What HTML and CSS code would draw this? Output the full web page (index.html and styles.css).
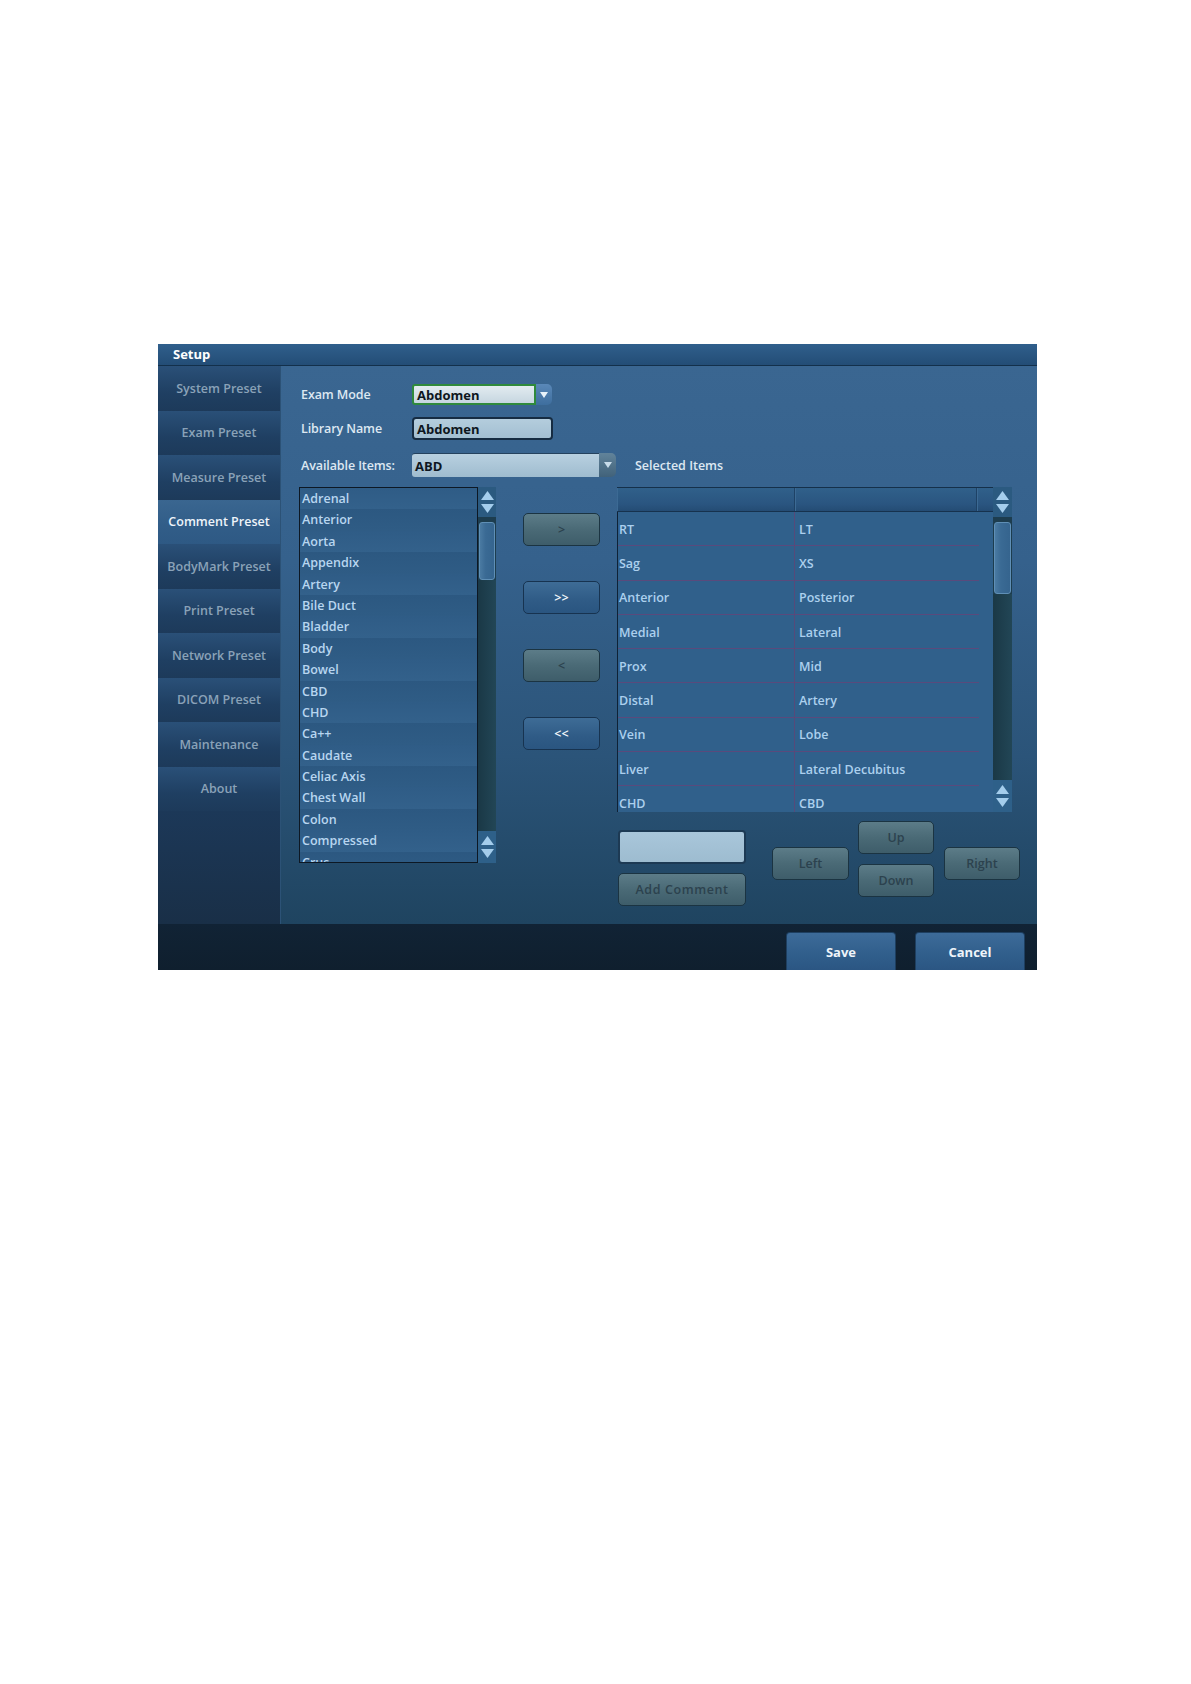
FILE: index.html
```html
<!DOCTYPE html>
<html>
<head>
<meta charset="utf-8">
<title>Setup</title>
<link rel="stylesheet" href="styles.css">
</head>
<body>
<div class="window">
  <div class="titlebar">Setup</div>
  <div class="body">
    <nav class="sidebar">
      <div class="nav-item">System Preset</div>
      <div class="nav-item">Exam Preset</div>
      <div class="nav-item">Measure Preset</div>
      <div class="nav-item active">Comment Preset</div>
      <div class="nav-item">BodyMark Preset</div>
      <div class="nav-item">Print Preset</div>
      <div class="nav-item">Network Preset</div>
      <div class="nav-item">DICOM Preset</div>
      <div class="nav-item">Maintenance</div>
      <div class="nav-item">About</div>
      <div class="nav-rest"></div>
    </nav>
    <main class="main">
      <div class="form-row row-exam">
        <span class="lbl">Exam Mode</span>
        <div class="combo combo-exam">
          <span class="field field-exam">Abdomen</span>
          <span class="combo-btn btn-blue"><svg width="8" height="6" viewBox="0 0 8 6"><polygon points="0,0 8,0 4,6" fill="#e8f2fa"/></svg></span>
        </div>
      </div>
      <div class="form-row row-lib">
        <span class="lbl">Library Name</span>
        <span class="field field-lib">Abdomen</span>
      </div>
      <div class="form-row row-avail">
        <span class="lbl">Available Items:</span>
        <div class="combo combo-avail">
          <span class="field field-avail">ABD</span>
          <span class="combo-btn btn-gray"><svg width="8" height="6" viewBox="0 0 8 6"><polygon points="0,0 8,0 4,6" fill="#c8dcea"/></svg></span>
        </div>
        <span class="lbl-sel">Selected Items</span>
      </div>
      <div class="content">
        <div class="avail">
          <div class="list">
            <div class="li">Adrenal</div>
            <div class="li">Anterior</div>
            <div class="li">Aorta</div>
            <div class="li">Appendix</div>
            <div class="li">Artery</div>
            <div class="li">Bile Duct</div>
            <div class="li">Bladder</div>
            <div class="li">Body</div>
            <div class="li">Bowel</div>
            <div class="li">CBD</div>
            <div class="li">CHD</div>
            <div class="li">Ca++</div>
            <div class="li">Caudate</div>
            <div class="li">Celiac Axis</div>
            <div class="li">Chest Wall</div>
            <div class="li">Colon</div>
            <div class="li">Compressed</div>
            <div class="li">Crus</div>
          </div>
          <div class="vscroll vs-left">
            <div class="vs-arrows">
              <svg width="13" height="9" viewBox="0 0 13 9"><polygon points="0,9 6.5,0 13,9" fill="#a4cdec"/></svg>
              <svg width="13" height="9" viewBox="0 0 13 9"><polygon points="0,0 13,0 6.5,9" fill="#a4cdec"/></svg>
            </div>
            <div class="vs-thumb thumb-left"></div>
            <div class="vs-track"></div>
            <div class="vs-arrows vs-bottom">
              <svg width="13" height="9" viewBox="0 0 13 9"><polygon points="0,9 6.5,0 13,9" fill="#a4cdec"/></svg>
              <svg width="13" height="9" viewBox="0 0 13 9"><polygon points="0,0 13,0 6.5,9" fill="#a4cdec"/></svg>
            </div>
          </div>
        </div>

        <div class="move-btns">
          <button class="btn btn-dis">&gt;</button>
          <button class="btn btn-act">&gt;&gt;</button>
          <button class="btn btn-dis">&lt;</button>
          <button class="btn btn-act">&lt;&lt;</button>
        </div>

        <div class="selected">
          <div class="table-wrap">
            <div class="table">
              <div class="thead">
                <div class="th th1"></div>
                <div class="th th2"></div>
                <div class="th th3"></div>
              </div>
              <div class="tbody">
                <div class="tr"><div class="td td1">RT</div><div class="td td2">LT</div></div>
                <div class="tr"><div class="td td1">Sag</div><div class="td td2">XS</div></div>
                <div class="tr"><div class="td td1">Anterior</div><div class="td td2">Posterior</div></div>
                <div class="tr"><div class="td td1">Medial</div><div class="td td2">Lateral</div></div>
                <div class="tr"><div class="td td1">Prox</div><div class="td td2">Mid</div></div>
                <div class="tr"><div class="td td1">Distal</div><div class="td td2">Artery</div></div>
                <div class="tr"><div class="td td1">Vein</div><div class="td td2">Lobe</div></div>
                <div class="tr"><div class="td td1">Liver</div><div class="td td2">Lateral Decubitus</div></div>
                <div class="tr"><div class="td td1">CHD</div><div class="td td2">CBD</div></div>
              </div>
            </div>
            <div class="vscroll vs-right">
              <div class="vs-arrows">
                <svg width="13" height="9" viewBox="0 0 13 9"><polygon points="0,9 6.5,0 13,9" fill="#a4cdec"/></svg>
                <svg width="13" height="9" viewBox="0 0 13 9"><polygon points="0,0 13,0 6.5,9" fill="#a4cdec"/></svg>
              </div>
              <div class="vs-thumb thumb-right"></div>
              <div class="vs-track"></div>
              <div class="vs-arrows vs-bottom">
                <svg width="13" height="9" viewBox="0 0 13 9"><polygon points="0,9 6.5,0 13,9" fill="#a4cdec"/></svg>
                <svg width="13" height="9" viewBox="0 0 13 9"><polygon points="0,0 13,0 6.5,9" fill="#a4cdec"/></svg>
              </div>
            </div>
          </div>

          <div class="controls">
            <div class="comment-col">
              <div class="comment-input"></div>
              <button class="btn btn-dis btn-add">Add Comment</button>
            </div>
            <button class="btn btn-dis btn-side">Left</button>
            <div class="updown">
              <button class="btn btn-dis btn-ud">Up</button>
              <button class="btn btn-dis btn-ud">Down</button>
            </div>
            <button class="btn btn-dis btn-side">Right</button>
          </div>
        </div>
      </div>
    </main>
  </div>
  <div class="footer">
    <button class="foot-btn">Save</button>
    <button class="foot-btn">Cancel</button>
  </div>
</div>
</body>
</html>
```

FILE: styles.css
```css
* { box-sizing: border-box; }
html, body { margin: 0; padding: 0; background: #ffffff; }
body {
  font-family: "Open Sans", "Liberation Sans", sans-serif;
  font-weight: 600;
  font-size: 12.5px;
}

.window {
  width: 879px;
  margin: 344px 0 0 158px;
  display: flex;
  flex-direction: column;
}

.titlebar {
  height: 22px;
  padding-left: 15px;
  line-height: 21px;
  color: #ffffff;
  font-weight: 700;
  font-size: 13px;
  background: linear-gradient(#305f8c, #234d76);
  border-bottom: 1px solid #13304b;
}

.body {
  display: flex;
  height: 558px;
}

.sidebar {
  width: 122px;
  display: flex;
  flex-direction: column;
  background: #1a3350;
}
.nav-item {
  height: 44.5px;
  display: flex;
  align-items: center;
  justify-content: center;
  font-size: 12.5px;
  color: #8aa2b8;
  background: linear-gradient(#2a5078, #1f3f62 60%, #1d3a5a);
  white-space: nowrap;
}
.nav-item.active {
  color: #eef4fa;
  background: linear-gradient(#3a6690, #315d88 60%, #2e5984);
}
.nav-rest {
  flex: 1;
  background: linear-gradient(#1c3858, #192f47);
}

.main {
  flex: 1;
  padding: 18px 0 0 18px;
  background: linear-gradient(#3a6691 0%, #35618c 35%, #2b5479 70%, #1f4460 100%);
  border-left: 1px solid #2c5276;
}

.form-row {
  display: flex;
  align-items: center;
}
.row-exam { height: 21px; }
.row-lib { height: 23px; margin-top: 12px; }
.row-avail { height: 24px; margin-top: 13px; }

.lbl {
  width: 113px;
  padding-left: 2px;
  color: #dde8f2;
  font-size: 12.5px;
  letter-spacing: -0.1px;
  white-space: nowrap;
}
.lbl-sel {
  margin-left: 19px;
  color: #dde8f2;
  font-size: 12.5px;
}

.combo {
  display: flex;
  height: 100%;
}
.field {
  display: flex;
  align-items: center;
  padding-left: 3px;
  color: #0e1620;
  font-weight: 700;
  font-size: 13px;
  height: 100%;
}
.field-exam {
  width: 124px;
  background: linear-gradient(#e2ebf0, #c6d6e0);
  border: 2px solid #2f8a3c;
  border-radius: 3px 0 0 3px;
}
.field-lib {
  width: 141px;
  background: linear-gradient(#b4cddd, #a3bfd2);
  border: 2px solid #162c42;
  border-radius: 4px;
}
.field-avail {
  width: 187px;
  background: linear-gradient(#b8d0e0, #9fbccf);
  border-top: 1px solid #24425e;
  border-radius: 3px 0 0 3px;
}
.combo-btn {
  display: flex;
  align-items: center;
  justify-content: center;
  height: 100%;
}
.btn-blue {
  width: 16px;
  background: linear-gradient(#5a88b8, #3e6e9e);
  border-radius: 0 5px 5px 0;
}
.btn-gray {
  width: 17px;
  background: linear-gradient(#61839a, #41627a);
  border-radius: 0 5px 5px 0;
}

.content {
  display: flex;
  align-items: flex-start;
  margin-top: 10px;
}

.avail {
  display: flex;
  height: 376px;
}
.list {
  width: 179px;
  height: 376px;
  overflow: hidden;
  border: 1px solid #0d1824;
  background: #2e5b84;
}
.li {
  height: 21.4px;
  line-height: 21.4px;
  padding-left: 2px;
  color: #b8d6f0;
  font-size: 12.5px;
  white-space: nowrap;
}
.li:nth-child(odd) { background: linear-gradient(#2f5c86, #33618b); }
.li:nth-child(even) { background: linear-gradient(#2c5881, #2f5c85); }

.vscroll {
  display: flex;
  flex-direction: column;
  background: #1d3d4f;
}
.vs-left { width: 18px; height: 376px; }
.vs-right { width: 19px; height: 325px; }
.vs-arrows {
  height: 30px;
  display: flex;
  flex-direction: column;
  align-items: center;
  justify-content: center;
  gap: 4px;
  background: #2b5a80;
}
.vs-bottom { height: 32px; background: #2e6089; }
.vs-thumb {
  margin: 5px 1px 0 1px;
  background: linear-gradient(90deg, #4a7aa2, #3a6a94 40%, #35648e);
  border: 1px solid #5f8fb6;
  border-radius: 3px;
}
.thumb-left { height: 58px; }
.thumb-right { height: 72px; }
.vs-track {
  flex: 1;
  background: linear-gradient(90deg, #1a3846, #224656);
}

.move-btns {
  display: flex;
  flex-direction: column;
  gap: 35px;
  margin-left: 27px;
  padding-top: 26px;
}
.btn {
  font-family: "Open Sans", "Liberation Sans", sans-serif;
  font-weight: 600;
  font-size: 12.5px;
  padding: 0;
  border-radius: 5px;
  cursor: default;
}
.move-btns .btn { width: 77px; height: 33px; }
.btn-dis {
  color: #2c424e;
  background: linear-gradient(#5c7c88, #4a6a76 50%, #3e5d6a);
  border: 1px solid #1b3442;
}
.btn-act {
  color: #f0f6fb;
  background: linear-gradient(#3e6c96, #2f5b86 60%, #2a5580);
  border: 1px solid #173350;
}

.selected {
  margin-left: 17px;
  display: flex;
  flex-direction: column;
}
.table-wrap {
  display: flex;
  height: 325px;
}
.table {
  width: 376px;
  height: 325px;
  display: flex;
  flex-direction: column;
  overflow: hidden;
  background: #30608b;
  border-top: 1px solid #15304a;
}
.thead {
  display: flex;
  height: 24px;
  flex: none;
  background: linear-gradient(#30608a, #2a5580 70%, #244c74);
  border-bottom: 1px solid #16324e;
}
.th { height: 100%; border-right: 1px solid #1e4266; box-shadow: inset 1px 0 0 #3c6a94; }
.th1 { width: 178px; }
.th2 { width: 182px; }
.th3 { flex: 1; border-right: none; }
.tbody { flex: 1; overflow: hidden; border-left: 1px solid #0f2236; }
.tr {
  display: flex;
  height: 34.3px;
  flex: none;
  background:
    linear-gradient(#5a4a7c, #5a4a7c) left bottom / 361px 1px no-repeat,
    #30608b;
}
.td {
  display: flex;
  align-items: center;
  color: #acd0ee;
  font-size: 12.5px;
  white-space: nowrap;
}
.td1 { width: 177px; padding-left: 1px; border-right: 1px solid #564a7a; }
.td2 { flex: 1; padding-left: 4px; }

.controls {
  display: flex;
  align-items: flex-start;
  margin-top: 9px;
}
.comment-col {
  display: flex;
  flex-direction: column;
  gap: 9px;
  margin-top: 9px;
  margin-left: 1px;
}
.comment-input {
  width: 128px;
  height: 34px;
  background: linear-gradient(#a9c6da, #9dbcd0);
  border: 2px solid #1d3a54;
  border-radius: 4px;
}
.btn-add { width: 128px; height: 33px; font-size: 12.5px; letter-spacing: 0.6px; }
.btn-side { width: 77px; height: 33px; margin-top: 26px; }
.controls > .btn-side:first-of-type { margin-left: 26px; }
.updown {
  display: flex;
  flex-direction: column;
  gap: 10px;
  margin-left: 9px;
}
.btn-ud { width: 76px; height: 33px; }
.controls > .btn-side:last-child { margin-left: 10px; width: 76px; }

.footer {
  height: 46px;
  display: flex;
  justify-content: flex-end;
  align-items: flex-end;
  gap: 19px;
  padding-right: 12px;
  background: linear-gradient(#112335, #0f1f2e);
}
.foot-btn {
  width: 110px;
  height: 38px;
  padding: 0;
  color: #eef4fa;
  font-family: "Open Sans", "Liberation Sans", sans-serif;
  font-weight: 700;
  font-size: 13px;
  background: linear-gradient(#3d6b99, #305e8b 60%, #2b5683);
  border: 1px solid #1e3f60;
  border-bottom: none;
  border-radius: 4px 4px 0 0;
}
```
